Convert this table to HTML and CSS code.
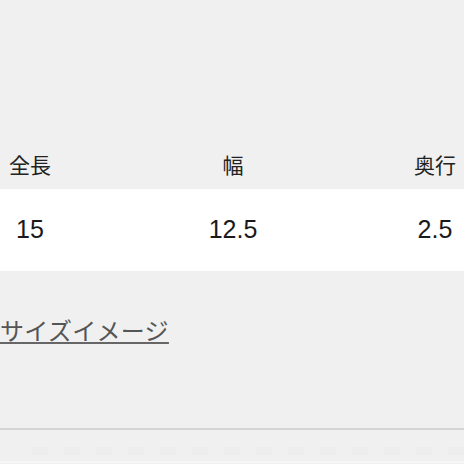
FILE: index.html
```html
<!DOCTYPE html>
<html lang="ja">
<head>
<meta charset="utf-8">
<link rel="stylesheet" href="styles.css">
</head>
<body>
<main class="page">
  <section class="size-table">
    <div class="row head">
      <div class="cell">全長</div>
      <div class="cell">幅</div>
      <div class="cell">奥行</div>
    </div>
    <div class="row body">
      <div class="cell">15</div>
      <div class="cell">12.5</div>
      <div class="cell">2.5</div>
    </div>
  </section>
  <div class="link-wrap">
    <a class="size-link" href="#">サイズイメージ</a>
  </div>
  <div class="divider"></div>
  <div class="dashes">
    <span></span><span></span><span></span><span></span><span></span><span></span><span></span><span></span><span></span><span></span><span></span><span></span><span></span><span></span>
  </div>
  <div class="bottom-line"></div>
</main>
</body>
</html>
```

FILE: styles.css
```css
html, body {
  margin: 0;
  padding: 0;
  background: #f0f0f0;
  overflow: hidden;
}
.page {
  width: 464px;
  height: 464px;
  padding-top: 140px;
  box-sizing: border-box;
  font-family: "Noto Sans CJK JP", "Noto Sans", sans-serif;
  color: #222;
}
.row {
  display: grid;
  grid-template-columns: 60px 1fr 58px;
  align-items: center;
}
.cell {
  text-align: center;
  white-space: nowrap;
}
.row.head {
  height: 49px;
  font-size: 21px;
  color: #222;
}
.row.head .cell {
  padding-bottom: 2px;
}
.row.body {
  height: 82px;
  background: #ffffff;
  font-family: "Liberation Sans", "Noto Sans", sans-serif;
  font-size: 25px;
  color: #1a1a1a;
}
.row.body .cell {
  padding-bottom: 2px;
}
.link-wrap {
  height: 157px;
  padding-top: 45px;
  box-sizing: border-box;
}
.size-link {
  font-size: 24px;
  letter-spacing: 0.3px;
  color: #555;
  text-decoration: underline;
  text-decoration-thickness: 2px;
  text-underline-offset: 2px;
  text-decoration-color: #666;
  line-height: 28px;
}
.divider {
  height: 2px;
  background: #d4d4d4;
}
.dashes {
  display: flex;
  gap: 16px;
  padding: 17px 0 0 32px;
  height: 31px;
  box-sizing: border-box;
}
.dashes span {
  width: 16px;
  height: 8px;
  background: #ededed;
  flex: none;
}
.bottom-line {
  height: 2px;
  background: #f7f7f7;
}
```
